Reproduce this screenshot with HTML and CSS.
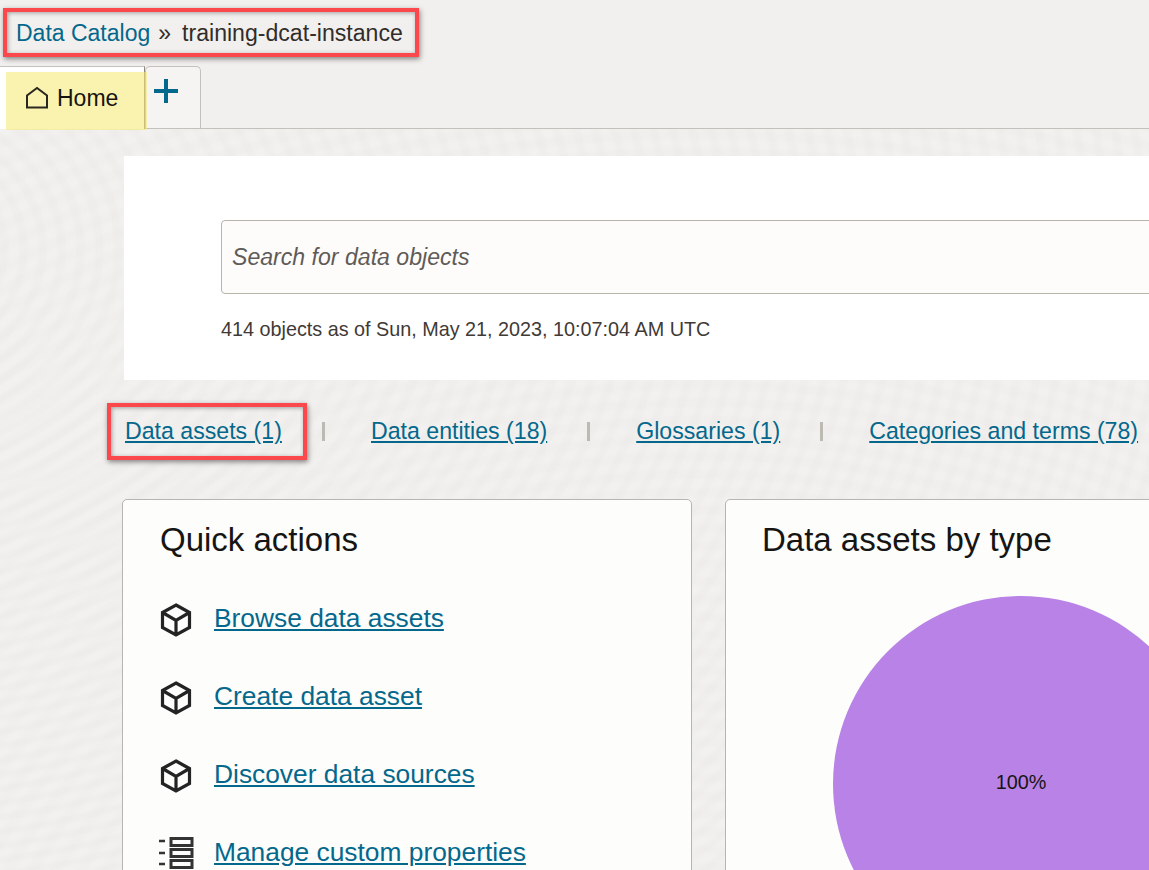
FILE: index.html
```html
<!DOCTYPE html>
<html lang="en">
<head>
<meta charset="utf-8">
<title>Data Catalog</title>
<link rel="stylesheet" href="styles.css">
</head>
<body>
<div class="page">
  <header class="top">
    <div class="crumb-row">
      <div class="crumbs callout">
        <a class="crumb-link" href="#">Data Catalog</a>
        <span class="crumb-sep">»</span>
        <span class="crumb-current">training-dcat-instance</span>
      </div>
    </div>
    <div class="tabs">
      <div class="tab-home">
        <div class="tab-home-mark">
          <svg class="home-icon" viewBox="0 0 24 24" width="24" height="24" aria-hidden="true">
            <path d="M2 21.500V9.500L12 2L22 9.500V21.500Z" fill="none" stroke="#2a2720" stroke-width="2"/>
          </svg>
          <span>Home</span>
        </div>
      </div>
      <div class="tab-add">
        <svg viewBox="0 0 26 26" width="26" height="26" aria-hidden="true">
          <path d="M1 13H25M13 1V25" fill="none" stroke="#04688c" stroke-width="4"/>
        </svg>
      </div>
    </div>
  </header>
  <main class="main">
    <section class="search-card">
      <div class="search-box">Search for data objects</div>
      <p class="stamp">414 objects as of Sun, May 21, 2023, 10:07:04 AM UTC</p>
    </section>
    <nav class="counts">
      <div class="count-first callout"><a href="#">Data assets (1)</a></div>
      <span class="count-sep"></span>
      <a class="count-link" href="#">Data entities (18)</a>
      <span class="count-sep"></span>
      <a class="count-link" href="#">Glossaries (1)</a>
      <span class="count-sep"></span>
      <a class="count-link" href="#">Categories and terms (78)</a>
    </nav>
    <div class="cards">
      <section class="card card-actions">
        <h2>Quick actions</h2>
        <ul class="actions">
          <li>
            <svg class="act-icon" viewBox="0 0 32 34" width="32" height="34" aria-hidden="true"><path d="M16 2L29.500 9.500V24.500L16 32L2.500 24.500V9.500ZM2.500 9.500L16 17.500L29.500 9.500M16 17.500V32" fill="none" stroke="#232323" stroke-width="3.200"/></svg>
            <a href="#">Browse data assets</a>
          </li>
          <li>
            <svg class="act-icon" viewBox="0 0 32 34" width="32" height="34" aria-hidden="true"><path d="M16 2L29.500 9.500V24.500L16 32L2.500 24.500V9.500ZM2.500 9.500L16 17.500L29.500 9.500M16 17.500V32" fill="none" stroke="#232323" stroke-width="3.200"/></svg>
            <a href="#">Create data asset</a>
          </li>
          <li>
            <svg class="act-icon" viewBox="0 0 32 34" width="32" height="34" aria-hidden="true"><path d="M16 2L29.500 9.500V24.500L16 32L2.500 24.500V9.500ZM2.500 9.500L16 17.500L29.500 9.500M16 17.500V32" fill="none" stroke="#232323" stroke-width="3.200"/></svg>
            <a href="#">Discover data sources</a>
          </li>
          <li>
            <svg class="act-icon act-icon-list" viewBox="0 0 36 32" width="36" height="32" aria-hidden="true"><path d="M0 4H6M0 16H6M0 27H6" fill="none" stroke="#333" stroke-width="2.500"/><path d="M12 1.500H33V8.500H12ZM12 12.500H33V19.500H12ZM12 23.500H33V30.500H12Z" fill="none" stroke="#333" stroke-width="3"/></svg>
            <a href="#">Manage custom properties</a>
          </li>
        </ul>
      </section>
      <section class="card card-chart">
        <h2>Data assets by type</h2>
        <div class="pie"><span>100%</span></div>
      </section>
    </div>
  </main>
</div>
</body>
</html>
```

FILE: styles.css
```css
* { box-sizing: border-box; }
html, body { margin: 0; height: 100%; overflow: hidden; }
body {
  font-family: "Liberation Sans", Arial, sans-serif;
  color: #161513;
  background: #f1efed;
}
a { color: #04688c; }
.page { width: 1149px; height: 870px; overflow: hidden; display: flex; flex-direction: column; }

.callout {
  border: 4px solid #fb484c;
  box-shadow: 1px 2px 5px rgba(40, 40, 40, .55), inset 1px 1px 4px rgba(40, 40, 40, .4);
}

.top {
  height: 129px;
  flex: none;
  background: #f1f0ee;
  border-bottom: 1px solid #c4c0bb;
}
.crumb-row { height: 66px; padding: 8px 0 0 3px; }
.crumbs {
  width: 416px;
  height: 49px;
  display: flex;
  align-items: center;
  padding: 2px 0 0 9px;
  font-size: 23px;
  white-space: nowrap;
}
.crumb-link { text-decoration: none; color: #04688c; }
.crumb-sep { margin-left: 8px; color: #312d2a; }
.crumb-current { margin-left: 11px; color: #312d2a; font-size: 23.100px; }

.tabs { display: flex; height: 63px; }
.tab-home {
  width: 145px;
  background: #fff;
  border-top: 1px solid #c4c0bb;
  border-right: 1px solid #8d897f;
  position: relative;
}
.tab-home-mark {
  position: absolute;
  left: 6px;
  top: 5px;
  width: 141px;
  height: 58px;
  background: rgba(245, 233, 110, .55);
  display: flex;
  align-items: center;
  padding: 0 0 6px 19px;
  gap: 8px;
  font-size: 23px;
  color: #161513;
}
.home-icon { flex: none; }
.tab-add {
  width: 56px;
  height: 62px;
  background: #f5f4f2;
  border: 1px solid #c4c0bb;
  border-bottom: 0;
  border-radius: 5px 5px 0 0;
  padding: 11px 0 0 7px;
}
.tab-add svg { display: block; }

.main {
  flex: 1;
  min-height: 0;
  padding: 27px 0 0 122px;
  background-color: #f0efed;
  background-image:
    repeating-radial-gradient(ellipse 300px 220px at -160px 120px, rgba(255,255,255,.08) 0 6px, rgba(226,224,221,.1) 10px 15px, rgba(255,255,255,.08) 19px),
    repeating-radial-gradient(ellipse 320px 260px at 700px 1000px, rgba(255,255,255,.06) 0 6px, rgba(226,224,221,.08) 11px 17px, rgba(255,255,255,.06) 22px);
}

.search-card {
  margin-left: 2px;
  width: 1100px;
  height: 224px;
  background: #fff;
  padding: 64px 0 0 97px;
}
.search-box {
  height: 74px;
  background: #fdfcfb;
  border: 1px solid #b8b3ab;
  border-radius: 4px;
  padding: 0 0 0 10px;
  display: flex;
  align-items: center;
  font-size: 23.100px;
  font-style: italic;
  color: #5f5b57;
}
.stamp { margin: 23px 0 0; font-size: 19.800px; line-height: 24px; color: #3f3a36; }

.counts {
  display: flex;
  align-items: center;
  height: 119px;
  padding-bottom: 16px;
  margin-left: -15px;
  font-size: 23.150px;
  white-space: nowrap;
}
.count-first {
  width: 200px;
  height: 57px;
  display: flex;
  align-items: center;
  padding-left: 14px;
  flex: none;
}
.count-sep {
  flex: none;
  width: 3px;
  height: 19px;
  margin: 0 46px 0 15px;
  background: #bdb9b3;
}
.counts a { text-underline-offset: 2px; }
.count-link + .count-sep { margin-left: 40px; }

.cards { display: flex; gap: 33px; align-items: flex-start; }
.card {
  flex: none;
  height: 400px;
  background: #fdfdfb;
  border: 1px solid #b8b5b0;
  border-radius: 5px;
  padding: 20px 0 0 37px;
}
.card-actions { width: 570px; }
.card-chart { width: 480px; padding-left: 36px; }
.card h2 { margin: 0; font-size: 33px; line-height: 40px; font-weight: 400; color: #161513; }

.actions { list-style: none; margin: 19px 0 0; padding: 0; }
.actions li { display: flex; align-items: center; height: 78px; font-size: 26.350px; }
.act-icon { flex: none; margin: 3px 22px 0 0; }
.act-icon-list { margin: 1px 19px 0 -1px; }

.pie {
  width: 376px;
  height: 376px;
  margin: 36px 0 0 71px;
  border-radius: 50%;
  background: #b982e6;
  display: flex;
  align-items: center;
  justify-content: center;
  padding-bottom: 3px;
  font-size: 19.800px;
  color: #161513;
}
```
